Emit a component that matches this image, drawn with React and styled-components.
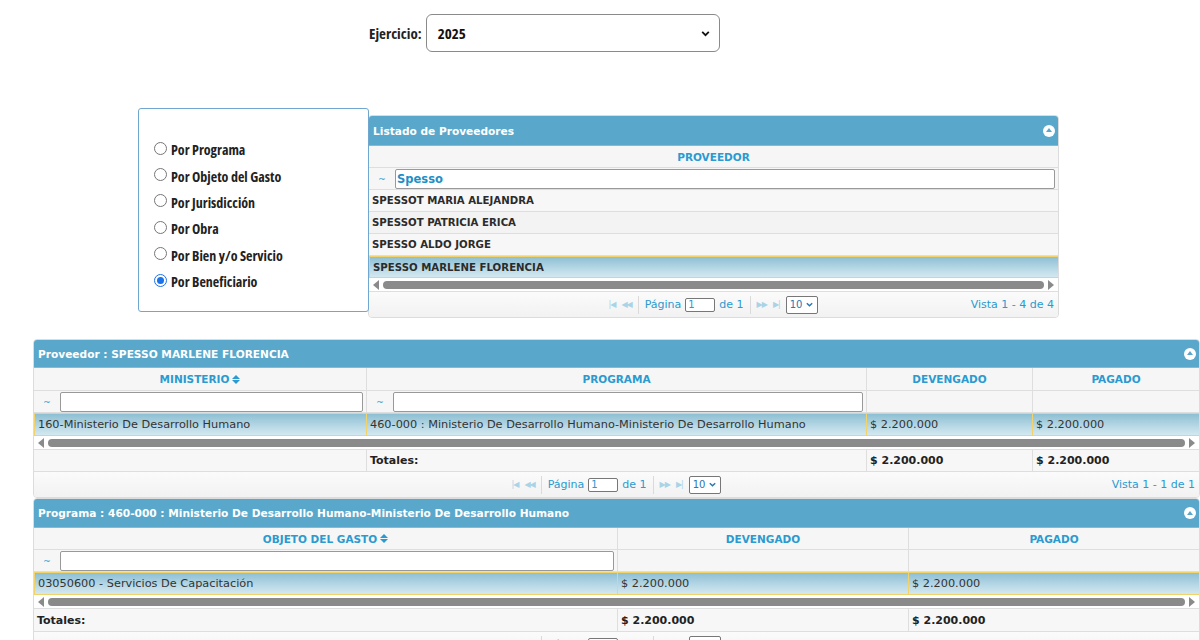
import React from 'react';
import styled, { createGlobalStyle, css } from 'styled-components';

const GlobalStyle = createGlobalStyle`
  html, body {
    margin: 0;
    background: #fff;
    overflow: hidden;
  }
  body {
    font-family: "DejaVu Sans", Verdana, sans-serif;
    color: #333;
  }
`;

const narrow = css`
  font-family: "Open Sans", "Liberation Sans Narrow", "DejaVu Sans", sans-serif;
  font-stretch: 75%;
  font-weight: bold;
  color: #222;
`;

// --- top: ejercicio selector ---
const YearBar = styled.div`
  display: flex;
  align-items: center;
  gap: 4px;
  padding: 14px 0 0 369px;
`;

const YearLabel = styled.span`
  ${narrow};
  font-size: 15px;
`;

const YearSelect = styled.div`
  width: 294px;
  height: 38px;
  border: 1px solid #8a8a8a;
  border-radius: 6px;
  display: flex;
  align-items: center;
  justify-content: space-between;
  padding: 0 8px 0 11px;
  box-sizing: border-box;
  ${narrow};
  color: #111;
  font-size: 15px;
`;

// --- middle section ---
const TopRow = styled.div`
  display: flex;
  align-items: flex-start;
  margin: 56px 0 0 138px;
`;

const OptionsBox = styled.div`
  width: 231px;
  height: 204px;
  box-sizing: border-box;
  border: 1px solid #6fa7cf;
  border-radius: 3px;
  padding: 31px 0 0 15px;
  display: flex;
  flex-direction: column;
  gap: 7px;
  margin-right: -1px;
  position: relative;
  z-index: 1;
  background: #fff;
`;

const Option = styled.label`
  display: flex;
  align-items: center;
  gap: 4px;
  height: 19.4px;
  ${narrow};
  font-size: 14px;
`;

const Radio = styled.span`
  width: 11px;
  height: 11px;
  border-radius: 50%;
  border: 1px solid ${p => (p.checked ? '#1a73e8' : '#767676')};
  background: #fff;
  display: flex;
  align-items: center;
  justify-content: center;
  margin-top: -3px;
  &::after {
    content: '';
    display: ${p => (p.checked ? 'block' : 'none')};
    width: 7px;
    height: 7px;
    border-radius: 50%;
    background: #1a73e8;
  }
`;

// --- grid (jqGrid-like panel) ---
const Panel = styled.div`
  width: ${p => p.width}px;
  margin: ${p => p.margin || 0};
  border: 1px solid #dcdcdc;
  border-radius: 4px;
  background: #fafafa;
  overflow: hidden;
  box-sizing: border-box;
`;

const PanelTitle = styled.div`
  height: ${p => p.h}px;
  background: #59a8cb;
  border-bottom: 1px solid #f0a52a;
  color: #fff;
  font-weight: bold;
  font-size: 10.6px;
  display: flex;
  align-items: center;
  justify-content: space-between;
  padding: 0 3px 0 4px;
  box-sizing: border-box;
`;

const Collapse = styled.span`
  width: 12px;
  height: 12px;
  border-radius: 50%;
  background: #fff;
  display: flex;
  align-items: center;
  justify-content: center;
  &::after {
    content: '';
    border-left: 3.5px solid transparent;
    border-right: 3.5px solid transparent;
    border-bottom: 4px solid #59a8cb;
    margin-top: -1px;
  }
`;

const Row = styled.div`
  display: grid;
  grid-template-columns: ${p => p.cols};
  height: ${p => p.h}px;
  box-sizing: border-box;
  border-bottom: 1px solid ${p => (p.sel ? '#f2d36b' : '#dedede')};
  background: ${p =>
    p.sel
      ? 'linear-gradient(to bottom, #8dbfd4 0%, #b9d9e6 60%, #d3e8f0 100%)'
      : p.head
      ? '#f6f6f6'
      : p.alt
      ? '#f3f3f3'
      : '#f7f7f7'};
  ${p => p.sel && 'border-top: 1px solid #f2d36b;'}
`;

const Cell = styled.div`
  display: flex;
  align-items: center;
  justify-content: ${p => (p.center ? 'center' : 'flex-start')};
  gap: 3px;
  padding: 0 3px;
  overflow: hidden;
  white-space: nowrap;
  border-right: 1px solid ${p => (p.sel ? '#f2d36b' : '#dedede')};
  font-size: ${p => (p.bold ? '11px' : '11.3px')};
  font-weight: ${p => (p.bold ? 'bold' : 'normal')};
  color: ${p => (p.bold ? '#222' : '#333')};
  &:first-child {
    ${p => p.sel && 'border-left: 1px solid #f2d36b;'}
  }
  &:last-child {
    border-right: none;
  }
`;

const ColHead = styled(Cell)`
  color: #2a9ad0;
  font-weight: bold;
  font-size: 10.5px;
  justify-content: center;
`;

const SortIcon = styled.span`
  display: inline-flex;
  flex-direction: column;
  gap: 1px;
  &::before, &::after {
    content: '';
    border-left: 4px solid transparent;
    border-right: 4px solid transparent;
  }
  &::before { border-bottom: 4px solid #2a9ad0; }
  &::after { border-top: 4px solid #2a9ad0; }
`;

const Tilde = styled.span`
  width: 20px;
  text-align: center;
  font-size: 9px;
  color: #2a9ad0;
  flex: none;
`;

const FilterInput = styled.div`
  flex: 1;
  height: 20px;
  border: 1px solid #999;
  border-radius: 2px;
  background: #fff;
  box-sizing: border-box;
  display: flex;
  align-items: center;
  padding-left: 1px;
  font-size: 11.5px;
  font-weight: bold;
  color: #1e8fc6;
`;

const NameCell = styled(Cell)`
  font-weight: bold;
  font-size: 10.2px;
  color: #2b2b2b;
`;

const ScrollRow = styled.div`
  height: ${p => p.h}px;
  display: flex;
  align-items: center;
  gap: 4px;
  padding: 0 4px;
  background: #fff;
  border-bottom: 1px solid #dedede;
  box-sizing: border-box;
`;

const Arrow = styled.span`
  flex: none;
  border-top: 5px solid transparent;
  border-bottom: 5px solid transparent;
  ${p =>
    p.right
      ? 'border-left: 6px solid #8a8a8a;'
      : 'border-right: 6px solid #8a8a8a;'}
`;

const Thumb = styled.span`
  flex: 1;
  height: 8px;
  border-radius: 4px;
  background: #8a8a8a;
`;

const Pager = styled.div`
  height: ${p => p.h}px;
  display: grid;
  grid-template-columns: 1fr auto 1fr;
  align-items: center;
  padding: 0 4px;
  background: linear-gradient(#fbfbfb, #f2f2f2);
  font-size: 11px;
  color: #2a9ad0;
`;

const PagerCenter = styled.div`
  display: flex;
  align-items: center;
  gap: 6px;
`;

const PagerIcon = styled.span`
  color: #a9d3e6;
  font-size: 8px;
  letter-spacing: -1px;
`;

const PagerSep = styled.span`
  width: 1px;
  height: 18px;
  background: #dadada;
`;

const PageBox = styled.span`
  display: inline-block;
  width: 26px;
  height: 12px;
  border: 1px solid #777;
  border-radius: 2px;
  background: #fff;
  color: #2a9ad0;
  font-size: 10px;
  line-height: 12px;
  padding-left: 2px;
  box-sizing: content-box;
  margin: 0 4px;
  vertical-align: middle;
`;

const SizeSelect = styled.span`
  display: inline-flex;
  align-items: center;
  gap: 3px;
  height: 16px;
  border: 1px solid #777;
  border-radius: 2px;
  background: #fff;
  padding: 0 3px;
  font-size: 10px;
  color: #2a78b0;
`;

const ViewInfo = styled.span`
  justify-self: end;
`;

const Chevron = ({ size = 10, color = '#111' }) => (
  <svg width={size} height={size} viewBox="0 0 10 10">
    <path d="M2 3.5 L5 6.5 L8 3.5" fill="none" stroke={color} strokeWidth="1.6" />
  </svg>
);

const PagerBar = ({ h, info }) => (
  <Pager h={h}>
    <span />
    <PagerCenter>
      <PagerIcon>|◀</PagerIcon>
      <PagerIcon>◀◀</PagerIcon>
      <PagerSep />
      <span>
        Página<PageBox>1</PageBox>de 1
      </span>
      <PagerSep />
      <PagerIcon>▶▶</PagerIcon>
      <PagerIcon>▶|</PagerIcon>
      <SizeSelect>
        10 <Chevron size={9} color="#2a78b0" />
      </SizeSelect>
    </PagerCenter>
    <ViewInfo>{info}</ViewInfo>
  </Pager>
);

const proveedores = [
  'SPESSOT MARIA ALEJANDRA',
  'SPESSOT PATRICIA ERICA',
  'SPESSO ALDO JORGE',
  'SPESSO MARLENE FLORENCIA',
];

const options = [
  'Por Programa',
  'Por Objeto del Gasto',
  'Por Jurisdicción',
  'Por Obra',
  'Por Bien y/o Servicio',
  'Por Beneficiario',
];

const ProveedoresGrid = () => (
  <Panel width={691} margin="7px 0 0 0">
    <PanelTitle h={30}>
      Listado de Proveedores
      <Collapse />
    </PanelTitle>
    <Row cols="1fr" h={22} head>
      <ColHead>PROVEEDOR</ColHead>
    </Row>
    <Row cols="1fr" h={22} head>
      <Cell>
        <Tilde>~</Tilde>
        <FilterInput>Spesso</FilterInput>
      </Cell>
    </Row>
    {proveedores.map((name, i) => (
      <Row key={name} cols="1fr" h={22} sel={i === 3} alt={i % 2 === 1}>
        <NameCell sel={i === 3}>{name}</NameCell>
      </Row>
    ))}
    <ScrollRow h={14}>
      <Arrow />
      <Thumb />
      <Arrow right />
    </ScrollRow>
    <PagerBar h={25} info="Vista 1 - 4 de 4" />
  </Panel>
);

const ProveedorGrid = () => {
  const cols = '333px 500px 166px 1fr';
  return (
    <Panel width={1167} margin="21px 0 0 33px">
      <PanelTitle h={28}>
        Proveedor : SPESSO MARLENE FLORENCIA
        <Collapse />
      </PanelTitle>
      <Row cols={cols} h={23} head>
        <ColHead>MINISTERIO <SortIcon /></ColHead>
        <ColHead>PROGRAMA</ColHead>
        <ColHead>DEVENGADO</ColHead>
        <ColHead>PAGADO</ColHead>
      </Row>
      <Row cols={cols} h={22} head>
        <Cell><Tilde>~</Tilde><FilterInput /></Cell>
        <Cell><Tilde>~</Tilde><FilterInput /></Cell>
        <Cell />
        <Cell />
      </Row>
      <Row cols={cols} h={23} sel>
        <Cell sel>160-Ministerio De Desarrollo Humano</Cell>
        <Cell sel>460-000 : Ministerio De Desarrollo Humano-Ministerio De Desarrollo Humano</Cell>
        <Cell sel>$ 2.200.000</Cell>
        <Cell sel>$ 2.200.000</Cell>
      </Row>
      <ScrollRow h={14}>
        <Arrow />
        <Thumb />
        <Arrow right />
      </ScrollRow>
      <Row cols={cols} h={22}>
        <Cell />
        <Cell bold>Totales:</Cell>
        <Cell bold>$ 2.200.000</Cell>
        <Cell bold>$ 2.200.000</Cell>
      </Row>
      <PagerBar h={25} info="Vista 1 - 1 de 1" />
    </Panel>
  );
};

const ProgramaGrid = () => {
  const cols = '584px 291px 1fr';
  return (
    <Panel width={1167} margin="0 0 0 33px">
      <PanelTitle h={29}>
        Programa : 460-000 : Ministerio De Desarrollo Humano-Ministerio De Desarrollo Humano
        <Collapse />
      </PanelTitle>
      <Row cols={cols} h={22} head>
        <ColHead>OBJETO DEL GASTO <SortIcon /></ColHead>
        <ColHead>DEVENGADO</ColHead>
        <ColHead>PAGADO</ColHead>
      </Row>
      <Row cols={cols} h={22} head>
        <Cell><Tilde>~</Tilde><FilterInput /></Cell>
        <Cell />
        <Cell />
      </Row>
      <Row cols={cols} h={23} sel>
        <Cell sel>03050600 - Servicios De Capacitación</Cell>
        <Cell sel>$ 2.200.000</Cell>
        <Cell sel>$ 2.200.000</Cell>
      </Row>
      <ScrollRow h={14}>
        <Arrow />
        <Thumb />
        <Arrow right />
      </ScrollRow>
      <Row cols={cols} h={23}>
        <Cell bold>Totales:</Cell>
        <Cell bold>$ 2.200.000</Cell>
        <Cell bold>$ 2.200.000</Cell>
      </Row>
      <PagerBar h={25} info="Vista 1 - 1 de 1" />
    </Panel>
  );
};

const App = () => (
  <>
    <GlobalStyle />
    <YearBar>
      <YearLabel>Ejercicio:</YearLabel>
      <YearSelect>
        2025
        <Chevron size={11} />
      </YearSelect>
    </YearBar>

    <TopRow>
      <OptionsBox>
        {options.map((o, i) => (
          <Option key={o}>
            <Radio checked={i === options.length - 1} />
            {o}
          </Option>
        ))}
      </OptionsBox>
      <ProveedoresGrid />
    </TopRow>

    <ProveedorGrid />
    <ProgramaGrid />
  </>
);

export default App;
